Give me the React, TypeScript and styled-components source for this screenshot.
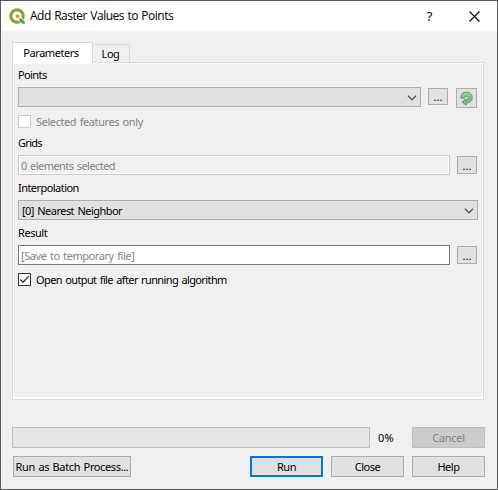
import React from "react";
import styled, { createGlobalStyle } from "styled-components";

const GlobalStyle = createGlobalStyle`
  * { box-sizing: border-box; }
  body { margin: 0; background: #f0f0f0; }
  button, input { font: inherit; color: inherit; }
`;

const Dialog = styled.div`
  width: 498px;
  height: 490px;
  border: 1px solid #5a5a5c;
  background: #f0f0f0;
  display: flex;
  flex-direction: column;
  font: 11px/14px "Noto Sans", "Open Sans", sans-serif;
  color: #000;
  white-space: nowrap;
`;

const Text = styled.span<{ $track?: number }>`
  letter-spacing: ${(p) => p.$track ?? -0.45}px;
  word-spacing: 1px;
`;

const TitleBar = styled.header`
  height: 30px;
  flex: none;
  background: #fff;
  display: flex;
  align-items: center;
  padding-left: 8px;
`;

const Title = styled.h1`
  margin: 0 0 0 4px;
  flex: 1;
  font: 400 12px/16px "Open Sans", sans-serif;
  letter-spacing: -0.5px;
  word-spacing: 0.8px;
`;

const TitleButton = styled.button`
  width: 45px;
  height: 30px;
  padding: 0;
  border: 0;
  background: none;
  font-size: 13px;
  display: flex;
  align-items: center;
  justify-content: center;
`;

const Tabs = styled.nav`
  display: flex;
  align-items: flex-end;
  height: 31px;
  flex: none;
  padding-left: 11px;
`;

const Tab = styled.button<{ $active?: boolean }>`
  width: ${(p) => (p.$active ? 81 : 37)}px;
  height: ${(p) => (p.$active ? 21 : 18)}px;
  margin-bottom: ${(p) => (p.$active ? -1 : 0)}px;
  padding: ${(p) => (p.$active ? "0 3px 1px 0" : "0 1px 0 0")};
  position: relative;
  border: 1px solid #d9d9d9;
  border-left-width: ${(p) => (p.$active ? 1 : 0)}px;
  border-bottom: 0;
  background: ${(p) => (p.$active ? "#fff" : "#f0f0f0")};
`;

const Pane = styled.main`
  width: 472px;
  height: 338px;
  flex: none;
  margin-left: 11px;
  border: 1px solid #dcdcdc;
  box-shadow: inset 1px 1px #fff, inset -1px -2px #fff;
  padding: 5px 5px 0;
`;

const Label = styled.div`
  height: 14px;
  margin-bottom: 5px;
`;

const Row = styled.div<{ $after: number }>`
  display: flex;
  height: 20px;
  gap: 7px;
  margin-bottom: ${(p) => p.$after}px;
`;

const Combo = styled.div<{ $width: number }>`
  width: ${(p) => p.$width}px;
  height: 20px;
  flex: none;
  border: 1px solid #adadad;
  background: #e1e1e1;
  display: flex;
  align-items: center;
  justify-content: space-between;
  padding: 1px 3px 0;
`;

const Field = styled.div<{ $disabled?: boolean }>`
  width: 432px;
  height: 20px;
  flex: none;
  border: 1px solid ${(p) => (p.$disabled ? "#cccccc" : "#7a7a7a")};
  background: ${(p) => (p.$disabled ? "#f0f0f0" : "#fff")};
  box-shadow: inset 0 0 0 1px #fff;
  color: #828282;
  padding: 3px 2px 0;
`;

const Browse = styled.button<{ $height: number }>`
  width: 20px;
  height: ${(p) => p.$height}px;
  margin-top: 1px;
  flex: none;
  padding: 0;
  border: 1px solid #adadad;
  background: #e1e1e1;
  display: flex;
  align-items: flex-end;
  justify-content: center;
  line-height: 14px;
`;

const IterateButton = styled.button`
  width: 21px;
  height: 20px;
  margin: 1px 0 0 1px;
  flex: none;
  padding: 0;
  border: 1px solid #adadad;
  background: #e1e1e1;
  display: grid;
  place-items: center;
`;

const CheckRow = styled.label<{ $disabled?: boolean; $after: number }>`
  display: flex;
  align-items: center;
  gap: 5px;
  height: 13px;
  margin-bottom: ${(p) => p.$after}px;
  color: ${(p) => (p.$disabled ? "#838383" : "#000")};
`;

const Box = styled.span<{ $disabled?: boolean }>`
  width: 13px;
  height: 13px;
  border: 1px solid ${(p) => (p.$disabled ? "#cccccc" : "#333")};
  background: #fff;
  display: grid;
  place-items: center;
`;

const Footer = styled.footer`
  margin-top: 27px;
  padding-left: 11px;
  display: flex;
  flex-direction: column;
  gap: 8px;
`;

const FooterRow = styled.div<{ $indent?: number }>`
  display: flex;
  height: 21px;
  padding-left: ${(p) => p.$indent ?? 0}px;
`;

const Progress = styled.div`
  width: 358px;
  border: 1px solid #bcbcbc;
  background: #e6e6e6;
`;

const Percent = styled.span`
  width: 42px;
  padding: 4px 0 0 8px;
  letter-spacing: 0.3px;
`;

const Button = styled.button<{ $kind?: "primary" | "disabled"; $width?: number }>`
  width: ${(p) => p.$width ?? 73}px;
  height: 21px;
  padding: 1px 0 0;
  border: ${(p) => (p.$kind === "primary" ? "2px solid #0078d7" : p.$kind === "disabled" ? "1px solid #bfbfbf" : "1px solid #adadad")};
  background: ${(p) => (p.$kind === "disabled" ? "#cccccc" : "#e1e1e1")};
  color: ${(p) => (p.$kind === "disabled" ? "#838383" : "#000")};
  display: flex;
  align-items: center;
  justify-content: center;
`;

const Actions = styled.div`
  display: flex;
  gap: 8px;
  margin-left: 119px;
`;

const Chevron = () => (
  <svg width="10" height="6" viewBox="0 0 10 6" fill="none" stroke="#505050" strokeWidth="1.25">
    <path d="M1 .8 5 4.8 9 .8" />
  </svg>
);

const Logo = () => (
  <svg width="17" height="17" viewBox="0 0 17 17">
    <circle cx="8" cy="8" r="6.2" fill="none" stroke="#79ab32" strokeWidth="3.2" />
    <path d="M8.6 9.2 10.4 7.6 16.5 13.4V16.5H13.5L8.6 11.8z" fill="#fff" />
    <path d="M10.4 10.4h1.8l3.6 3.4v1.9h-2.3l-3.1-3z" fill="#5b9540" />
    <path d="M6.7 6.7h2.6l1.3 1.3-2.2 2.2-1.7-1.5z" fill="#ee7f2b" />
    <path d="m9.8 8.9 1.5 1.4-1.2 1.2-1.4-1.4z" fill="#f6c07a" />
  </svg>
);

const Iterate = () => (
  <svg width="15" height="15" viewBox="0 0 15 15">
    <path
      d="M2 7.2C1.4 3.4 4 1.2 7.2 1.2c3.5 0 6 2.1 6 5.3 0 3.3-2.4 5.4-6 5.6v2.1L3 10.9 7.2 8v1.3c1.4 0 2.2-.7 2.2-1.9 0-1.2-.9-1.9-2.1-1.9-1.2 0-1.9.6-1.8 1.7z"
      fill="#7dc383"
      stroke="#3f8e48"
      strokeWidth=".8"
    />
    <path d="M3.4 5.7C3.7 3.5 5 2.5 7.3 2.5c2.3 0 3.8.9 4.4 2.4" fill="none" stroke="#b5deb5" />
  </svg>
);

export default function App() {
  return (
    <>
      <GlobalStyle />
      <Dialog>
        <TitleBar>
          <Logo />
          <Title>Add Raster Values to Points</Title>
          <TitleButton>?</TitleButton>
          <TitleButton>
            <svg width="11" height="11" viewBox="0 0 11 11" stroke="#000" strokeWidth="1.1">
              <path d="m.5.5 10 10M10.5.5l-10 10" />
            </svg>
          </TitleButton>
        </TitleBar>
        <Tabs>
          <Tab $active><Text>Parameters</Text></Tab>
          <Tab><Text>Log</Text></Tab>
        </Tabs>
        <Pane>
          <Label><Text $track={-0.6}>Points</Text></Label>
          <Row $after={8}>
            <Combo $width={403}><span /><Chevron /></Combo>
            <Browse $height={17}>...</Browse>
            <IterateButton><Iterate /></IterateButton>
          </Row>
          <CheckRow $disabled $after={8}>
            <Box $disabled />
            <Text $track={-0.41}>Selected features only</Text>
          </CheckRow>
          <Label><Text $track={-0.7}>Grids</Text></Label>
          <Row $after={6}>
            <Field $disabled><Text $track={-0.55}>0 elements selected</Text></Field>
            <Browse $height={18}>...</Browse>
          </Row>
          <Label><Text $track={-0.55}>Interpolation</Text></Label>
          <Row $after={6}>
            <Combo $width={460}><Text $track={-0.53}>[0] Nearest Neighbor</Text><Chevron /></Combo>
          </Row>
          <Label><Text>Result</Text></Label>
          <Row $after={8}>
            <Field><Text $track={-0.43}>[Save to temporary file]</Text></Field>
            <Browse $height={18}>...</Browse>
          </Row>
          <CheckRow $after={0}>
            <Box>
              <svg width="11" height="11" viewBox="0 0 11 11" fill="none" stroke="#333" strokeWidth="1.3">
                <path d="m1.3 5.5 2.6 2.7 5.8-5.9" />
              </svg>
            </Box>
            <Text $track={-0.61}>Open output file after running algorithm</Text>
          </CheckRow>
        </Pane>
        <Footer>
          <FooterRow>
            <Progress />
            <Percent>0%</Percent>
            <Button $kind="disabled"><Text $track={-0.3}>Cancel</Text></Button>
          </FooterRow>
          <FooterRow $indent={1}>
            <Button $width={118}><Text $track={-0.37}>Run as Batch Process...</Text></Button>
            <Actions>
              <Button $kind="primary"><Text>Run</Text></Button>
              <Button><Text>Close</Text></Button>
              <Button><Text>Help</Text></Button>
            </Actions>
          </FooterRow>
        </Footer>
      </Dialog>
    </>
  );
}
